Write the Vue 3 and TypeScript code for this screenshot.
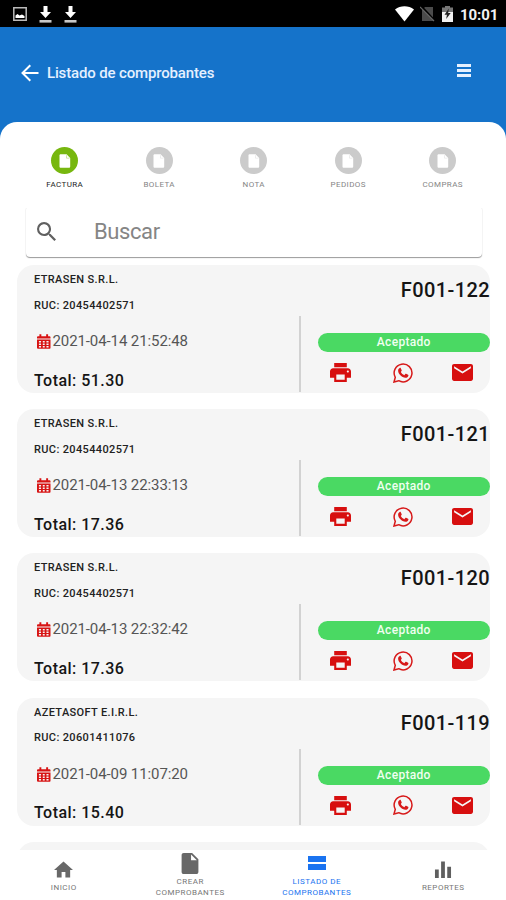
<script setup lang="ts">
interface Voucher {
  client: string
  ruc: string
  date: string
  total: string
  number: string
}

const tabs: string[] = ['Factura', 'Boleta', 'Nota', 'Pedidos', 'Compras']

const vouchers: Voucher[] = [
  { client: 'ETRASEN S.R.L.', ruc: '20454402571', date: '2021-04-14 21:52:48', total: '51.30', number: 'F001-122' },
  { client: 'ETRASEN S.R.L.', ruc: '20454402571', date: '2021-04-13 22:33:13', total: '17.36', number: 'F001-121' },
  { client: 'ETRASEN S.R.L.', ruc: '20454402571', date: '2021-04-13 22:32:42', total: '17.36', number: 'F001-120' },
  { client: 'AZETASOFT E.I.R.L.', ruc: '20601411076', date: '2021-04-09 11:07:20', total: '15.40', number: 'F001-119' },
]
</script>

<template>
  <div class="screen">
    <div class="status">
      <svg class="st-image" viewBox="0 0 14 14"><path fill="none" stroke="#bbb" stroke-width="1.5" d="M.8.8h12.4v12.4H.8z" /><path fill="#fff" d="M2.500 11V8.500l2-1.500 2 1.500 2.500-1 2.500 1.500v2z" /></svg>
      <svg v-for="n in 2" :key="n" class="st-down" viewBox="0 0 13 17"><path fill="#fff" d="M4.500 0h4v6h3.500L6.500 12 1 6h3.500z" /><path fill="#c8c8c8" d="M.5 14h12v2.600H.5z" /></svg>
      <span class="grow"></span>
      <svg class="st-wifi" viewBox="0 0 19 16"><path fill="#fff" d="M0 3.500C5.500-.8 13.500-.8 19 3.500L9.500 15.500z" /></svg>
      <svg class="st-sim" viewBox="0 0 15 16"><path fill="#4b4b4b" d="M5 1h8v14H2V4z" /><path stroke="#000" stroke-width="2" d="M1 0l14 15" /><path stroke="#666" stroke-width="1.200" d="M0 1l14 14" /></svg>
      <svg class="st-batt" viewBox="0 0 11 16"><path fill="#777" d="M3 0h5v1.500h3V7H0V1.500h3z" /><path fill="#f2f2f2" d="M0 6h11v10H0z" /><path fill="#222" d="M6.800 2.500 2.500 8.800h2.400L4.200 13l4.500-6H6.200z" /></svg>
      <span class="clock">10:01</span>
    </div>

    <header class="header">
      <svg class="back" viewBox="0 0 18 18"><path fill="none" stroke="#fff" stroke-width="2" d="M17.500 9H1.500M9.300 1.200 1.500 9l7.800 7.800" /></svg>
      <h1 class="title">Listado de comprobantes</h1>
      <span class="grow"></span>
      <span class="menu"><i></i><i></i><i></i></span>
    </header>

    <main class="sheet">
      <nav class="tabs">
        <div v-for="(tab, i) in tabs" :key="tab" class="tab" :class="{ active: i === 0 }">
          <span class="disc"><svg viewBox="0 0 12 14"><path fill="#fff" d="M1.800.3h5.800l3.600 3.600v8.500c0 .8-.5 1.300-1.300 1.300H1.800c-.8 0-1.300-.5-1.300-1.300V1.600C.5.800 1 .3 1.800.3z" /><path fill="none" stroke="currentColor" stroke-opacity=".5" stroke-width=".7" d="M7.500 1.200v3h3" /></svg></span>
          <span class="tab-label">{{ tab }}</span>
        </div>
      </nav>

      <div class="search">
        <svg viewBox="3 3 17.490 17.490"><path fill="#606060" d="M15.500 14h-.79l-.28-.27A6.470 6.470 0 0 0 16 9.500 6.500 6.500 0 1 0 9.500 16c1.610 0 3.090-.59 4.230-1.570l.27.28v.79l5 4.990L20.490 19l-4.990-5zm-6 0C7.010 14 5 11.990 5 9.500S7.010 5 9.500 5 14 7.010 14 9.500 11.990 14 9.500 14z" /></svg>
        <span class="placeholder">Buscar</span>
      </div>

      <section class="list">
        <article v-for="v in vouchers" :key="v.number" class="card">
          <div class="info">
            <div class="client">{{ v.client }}</div>
            <div class="ruc">RUC: {{ v.ruc }}</div>
            <div class="date">
              <svg viewBox="0 0 14 15"><path fill="#d71313" d="M2.500 0h2v2h5V0h2v2H13c.6 0 1 .4 1 1v1.500H0V3c0-.6.400-1 1-1h1.500zM0 5.500h14V14c0 .6-.4 1-1 1H1c-.6 0-1-.4-1-1z" /><path fill="#f5f5f5" d="M2 7h2.200v1.600H2zM6 7h2v1.600H6zM9.800 7H12v1.600H9.800zM2 9.600h2.200v1.500H2zM6 9.600h2v1.500H6zM9.800 9.600H12v1.500H9.800zM2 12.200h2.200v1.400H2zM6 12.200h2v1.400H6zM9.800 12.200H12v1.400H9.800z" /></svg>
              <span>{{ v.date }}</span>
            </div>
            <div class="total">Total: {{ v.total }}</div>
          </div>
          <div class="side">
            <div class="number">{{ v.number }}</div>
            <div class="actions">
              <div class="badge">Aceptado</div>
              <div class="icons">
                <svg class="print" viewBox="2 3 20 18"><path fill="#d70f0f" d="M19 8H5c-1.660 0-3 1.340-3 3v6h4v4h12v-4h4v-6c0-1.660-1.340-3-3-3zm-3 11H8v-5h8v5zm3-7c-.55 0-1-.45-1-1s.45-1 1-1 1 .45 1 1-.45 1-1 1zm-1-9H6v4h12V3z" /></svg>
                <svg class="whatsapp" viewBox="0 0 20 20"><path fill="none" stroke="#d71a1a" stroke-width="1.500" d="M1 19l1.300-4.700a8.900 8.900 0 1 1 3.400 3.400z" /><path fill="#d71a1a" d="M6.700 5c.3-.2.900-.2 1.100.2l.9 2.100c.1.300 0 .6-.2.800l-.7.900c.8 1.500 2 2.500 3.500 3.200l1-1.200c.2-.3.500-.3.800-.2l2 1c.4.200.4.500.3.900-.3 1.300-1.600 2.200-2.900 2.100C8.600 14.300 5.300 11 5.100 7.700c0-1.200.7-2.200 1.600-2.700z" /></svg>
                <svg class="mail" viewBox="2 4 20 16"><path fill="#d70f0f" d="M20 4H4c-1.100 0-1.990.9-1.990 2L2 18c0 1.100.9 2 2 2h16c1.100 0 2-.9 2-2V6c0-1.100-.9-2-2-2zm0 4-8 5-8-5V6l8 5 8-5v2z" /></svg>
              </div>
            </div>
          </div>
        </article>
        <article class="card"></article>
      </section>
    </main>

    <nav class="bottom">
      <div class="item short">
        <svg class="home" viewBox="2 3 20 17"><path fill="#686868" d="M10 20v-6h4v6h5v-8h3L12 3 2 12h3v8z" /></svg>
        <span>Inicio</span>
      </div>
      <div class="item">
        <svg class="file" viewBox="4 2 16 20"><path fill="#686868" d="M6 2c-1.100 0-1.990.9-1.990 2L4 20c0 1.100.89 2 1.990 2H18c1.100 0 2-.9 2-2V8l-6-6H6zm7 7V3.500L18.500 9H13z" /></svg>
        <span>Crear<br />comprobantes</span>
      </div>
      <div class="item current">
        <svg class="rows" viewBox="0 0 18 14"><path fill="#1a73f0" d="M0 0h18v6H0zM0 8h18v6H0z" /></svg>
        <span>Listado de<br />comprobantes</span>
      </div>
      <div class="item short">
        <svg class="bars" viewBox="0 0 18 18"><path fill="#5f5f5f" d="M.5 9h4v9h-4zM7 .5h4V18H7zM13.500 6h4v12h-4z" /></svg>
        <span>Reportes</span>
      </div>
    </nav>
  </div>
</template>

<style>
body {
  margin: 0;
  background: #fff;
}
</style>

<style scoped>
.screen {
  width: 506px;
  height: 900px;
  display: flex;
  flex-direction: column;
  overflow: hidden;
  background: #1573ca;
  font-family: Roboto, "Liberation Sans", sans-serif;
}
svg {
  display: block;
  flex: none;
}
.grow {
  flex: 1;
}
.status {
  height: 27px;
  flex: none;
  box-sizing: border-box;
  display: flex;
  align-items: center;
  padding: 1px 8px 0 13px;
  background: #000;
}
.st-image {
  width: 14px;
  height: 14px;
  margin-right: 12px;
}
.st-down {
  width: 13px;
  height: 17px;
  margin-right: 12px;
}
.st-wifi {
  width: 19px;
  height: 16px;
}
.st-sim {
  width: 15px;
  height: 16px;
  margin-left: 6px;
}
.st-batt {
  width: 11px;
  height: 16px;
  margin-left: 7px;
}
.clock {
  width: 38px;
  margin-left: 7px;
  padding-top: 1px;
  color: #f2f2f2;
  font-size: 15px;
  font-weight: 700;
  letter-spacing: -0.1px;
  white-space: nowrap;
}
.header {
  height: 95px;
  flex: none;
  box-sizing: border-box;
  display: flex;
  align-items: center;
  padding: 0 35px 3px 21px;
}
.back {
  width: 18px;
  height: 18px;
}
.title {
  margin: 0 0 0 8px;
  color: #e4f0ff;
  font-size: 15px;
  font-weight: 500;
  letter-spacing: -0.15px;
  white-space: nowrap;
}
.menu {
  display: flex;
  flex-direction: column;
  gap: 2px;
  width: 14px;
  margin-bottom: 5px;
}
.menu i {
  height: 3px;
  background: #e6f1ff;
}
.sheet {
  flex: 1;
  min-height: 0;
  overflow: hidden;
  border-radius: 17px 17px 0 0;
  background: #fff;
}
.tabs {
  display: grid;
  grid-template-columns: repeat(5, 94.5px);
  padding: 25px 0 0 17.500px;
  height: 59px;
}
.tab {
  display: flex;
  flex-direction: column;
  align-items: center;
  color: #cbcbcb;
}
.tab.active {
  color: #77b70f;
}
.disc {
  width: 27px;
  height: 27px;
  display: flex;
  align-items: center;
  justify-content: center;
  border-radius: 50%;
  background: currentColor;
}
.disc svg {
  width: 12px;
  height: 14px;
}
.tab-label {
  margin-top: 6px;
  color: #858585;
  font-size: 8px;
  line-height: 10px;
  letter-spacing: 0.4px;
  text-transform: uppercase;
}
.active .tab-label {
  color: #252525;
}
.search {
  width: 456px;
  height: 51px;
  margin-left: 26px;
  box-sizing: border-box;
  display: flex;
  align-items: center;
  padding: 0 0 0 11px;
  border-radius: 4px;
  box-shadow: 0 1px 1px #999, 0 0 1px #eee;
  clip-path: inset(2px -3px -4px -3px);
}
.search svg {
  width: 19px;
  height: 19px;
}
.placeholder {
  margin-left: 38px;
  color: #858585;
  font-size: 22px;
  line-height: 26px;
  letter-spacing: -0.4px;
}
.list {
  display: flex;
  flex-direction: column;
  gap: 16.2px;
  padding: 8px 16px 0 17px;
}
.card {
  height: 128px;
  flex: none;
  display: flex;
  overflow: hidden;
  border-radius: 17px;
  background: #f5f5f5;
  color: #151515;
}
.info {
  width: 282px;
  padding: 7px 0 0 17px;
  box-sizing: border-box;
}
.client,
.ruc {
  height: 25.5px;
  font-size: 11px;
  font-weight: 500;
  line-height: 16px;
  letter-spacing: 0.36px;
  color: #222;
}
.date {
  display: flex;
  align-items: center;
  gap: 2px;
  height: 20px;
  margin-top: 8px;
  padding-left: 3px;
  color: #555;
  font-size: 15px;
  letter-spacing: -0.1px;
}
.date svg {
  width: 13.5px;
  height: 15px;
  margin-top: 1px;
}
.total {
  margin-top: 19.500px;
  font-size: 16px;
  font-weight: 500;
  line-height: 20px;
  letter-spacing: 0.46px;
}
.side {
  flex: 1;
  display: flex;
  flex-direction: column;
}
.number {
  height: 51px;
  box-sizing: border-box;
  padding-top: 12px;
  font-size: 20px;
  font-weight: 500;
  line-height: 26px;
  letter-spacing: 0.4px;
  text-align: right;
  white-space: nowrap;
}
.actions {
  width: 191px;
  height: 76px;
  box-sizing: border-box;
  padding: 17px 0 0 16.500px;
  border-left: 2px solid #d2d2d2;
}
.badge {
  height: 19px;
  border-radius: 10px;
  background: #4ad963;
  color: #f0fff0;
  font-size: 12px;
  font-weight: 500;
  line-height: 19px;
  letter-spacing: 0.3px;
  text-align: center;
}
.icons {
  display: flex;
  align-items: center;
  justify-content: space-between;
  height: 20px;
  margin-top: 10.500px;
  padding: 0 17px 0 12px;
}
.print {
  width: 21px;
  height: 19px;
}
.whatsapp {
  width: 20px;
  height: 20px;
  margin-left: 3px;
}
.mail {
  width: 21px;
  height: 17px;
}
.bottom {
  height: 50px;
  flex: none;
  display: grid;
  grid-template-columns: repeat(4, 126.5px);
  padding-left: 0.5px;
  background: #fff;
}
.item {
  display: flex;
  flex-direction: column;
  align-items: center;
  color: #777;
  font-size: 8px;
  line-height: 11px;
  letter-spacing: 0.5px;
  text-align: center;
  text-transform: uppercase;
}
.current {
  color: #1a73f0;
}
.home {
  width: 19px;
  height: 17px;
  margin: 11px 0 4px;
}
.file {
  width: 18px;
  height: 21px;
  margin: 3px 0 2px;
}
.rows {
  width: 18px;
  height: 14px;
  margin: 6px 0;
}
.bars {
  width: 18px;
  height: 17px;
  margin: 11px 0 4px;
}
</style>
